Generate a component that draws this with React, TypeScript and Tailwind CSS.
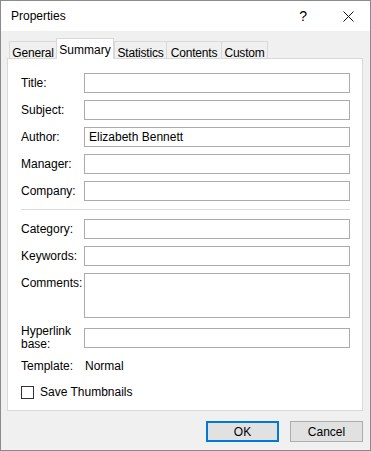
import React from 'react';

const font = { fontFamily: '"Liberation Sans", Arial, sans-serif' };

function Field({ label, value, tall }: { label: React.ReactNode; value?: string; tall?: boolean }) {
  return (
    <div className={`flex ${tall ? 'items-start' : 'items-center'}`}>
      <div className={`w-[63px] shrink-0 leading-[13px] ${tall ? 'pt-[4px]' : ''}`}>{label}</div>
      <div
        className={`w-[266px] border border-[#ababab] bg-white px-[4px] flex items-center ${
          tall ? 'h-[45px] items-start pt-[3px]' : 'h-[20px]'
        }`}
      >
        {value}
      </div>
    </div>
  );
}

export default function App() {
  const tabs = ['General', 'Summary', 'Statistics', 'Contents', 'Custom'];
  const widths = ['w-[48px]', 'w-[58px]', 'w-[53px]', 'w-[56px]', 'w-[47px]'];

  return (
    <div
      className="w-[371px] h-[451px] border border-[#8a8a8a] bg-[#f0f0f0] flex flex-col text-[12px] text-black"
      style={font}
    >
      {/* title bar */}
      <div className="h-[30px] bg-white flex items-center pl-[10px] pr-[16px] shrink-0">
        <span className="text-[12px]">Properties</span>
        <span className="ml-auto mr-[36px] text-[14px]">?</span>
        <svg width="11" height="11" viewBox="0 0 11 11" className="mt-[1px]">
          <path d="M0.5 0.5 L10.5 10.5 M10.5 0.5 L0.5 10.5" stroke="#111" strokeWidth="1" />
        </svg>
      </div>

      <div className="flex-1 pl-[6px] pt-[7px]">
        {/* tabs */}
        <div className="flex items-end h-[21px] -mb-[1px] pl-[2px] relative z-10">
          {tabs.map((t, i) =>
            i === 1 ? (
              <div
                key={t}
                className={`${widths[i]} h-[21px] bg-white border border-b-0 border-[#d9d9d9] flex justify-center pt-[2px] -ml-[1px]`}
              >
                {t}
              </div>
            ) : (
              <div
                key={t}
                className={`${widths[i]} h-[18px] border border-b-0 border-[#d9d9d9] flex justify-center pt-[2px] tracking-[-0.2px] ${
                  i === 0 ? '' : '-ml-[1px]'
                } ${i === 2 ? 'ml-0' : ''}`}
              >
                {t}
              </div>
            )
          )}
        </div>

        {/* panel */}
        <div className="w-[356px] h-[353px] bg-white border border-[#d9d9d9] pl-[13px] pt-[14px]">
          <div className="flex flex-col gap-[7px]">
            <Field label="Title:" />
            <Field label="Subject:" />
            <Field label="Author:" value="Elizabeth Bennett" />
            <Field label="Manager:" />
            <Field label="Company:" />
          </div>
          <div className="w-[329px] h-px bg-[#dcdcdc] mt-[8px] mb-[9px]" />
          <div className="flex flex-col gap-[7px]">
            <Field label="Category:" />
            <Field label="Keywords:" />
            <Field label="Comments:" tall />
          </div>
          <div className="mt-[7px]">
            <Field
              label={
                <>
                  Hyperlink
                  <br />
                  base:
                </>
              }
            />
          </div>
          <div className="flex items-center mt-[8px] h-[14px]">
            <div className="w-[64px]">Template:</div>
            <div>Normal</div>
          </div>
          <div className="flex items-center mt-[10px]">
            <div className="w-[13px] h-[13px] border border-[#333] bg-white" />
            <span className="ml-[6px]">Save Thumbnails</span>
          </div>
        </div>

        {/* buttons */}
        <div className="flex justify-end gap-[11px] mt-[10px] w-[356px]">
          <button className="w-[73px] h-[21px] bg-[#e1e1e1] border-2 border-[#0078d7] flex items-center justify-center">
            OK
          </button>
          <button className="w-[73px] h-[21px] bg-[#e1e1e1] border border-[#adadad] flex items-center justify-center">
            Cancel
          </button>
        </div>
      </div>
    </div>
  );
}
